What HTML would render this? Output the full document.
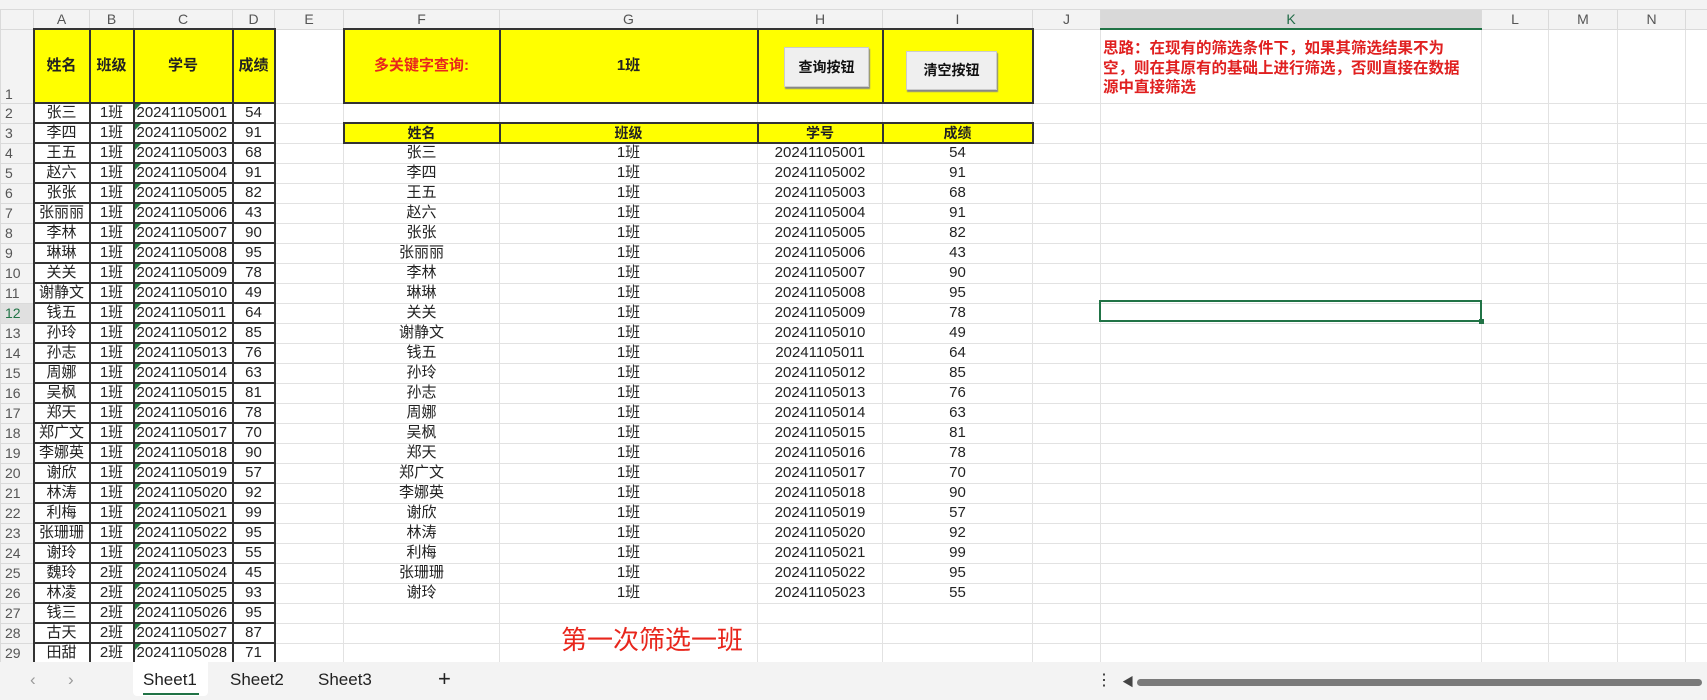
<!DOCTYPE html>
<html><head><meta charset="utf-8">
<style>
*{box-sizing:border-box;margin:0;padding:0}
body{width:1707px;height:700px;overflow:hidden;background:#fff;font-family:"Liberation Sans","Noto Sans CJK SC",sans-serif;position:relative}
.top{position:absolute;left:0;top:0;width:1707px;height:9px;background:#f3f3f3}
table{position:absolute;left:0;top:9px;border-collapse:collapse;table-layout:fixed;width:1707px}
td,th{border:1px solid #e2e2e2;padding:0;white-space:nowrap;overflow:hidden;text-align:center;font-weight:normal;font-size:15px;color:#222;height:20px;line-height:18px}
thead th{background:#f3f3f3;color:#555;font-size:14px;height:19px;border-color:#dadada}
tbody th{background:#f3f3f3;color:#555;font-size:14px;text-align:left;padding-left:4px;border-color:#dadada}
th.k{background:#d9d9d9;color:#1f6b46;border-bottom:2px solid #217346}
.r1 td,.r1 th{height:74px}
.r1 th{vertical-align:bottom}
.y{background:#ffff00;font-weight:bold}
.b{border:2px solid #333}
.c{text-align:left;padding-left:2px;position:relative}
.c::before{content:"";position:absolute;left:0;top:0;border-top:6px solid #1e7a3c;border-right:6px solid transparent}
.h td.y{font-weight:bold;font-size:14px}
.btn{position:absolute;background:#efefef;border:1px solid #ccc;box-shadow:1px 2px 1px #888;font-size:14px;font-weight:bold;text-align:center;color:#111}
.sel{position:absolute;left:1099px;top:300px;width:383px;height:22px;border:2px solid #217346}
.sel::after{content:"";position:absolute;right:-4px;bottom:-4px;width:5px;height:5px;background:#217346}
.note{position:absolute;left:1103px;top:39px;width:364px;color:#e02020;font-weight:bold;font-size:15.5px;line-height:19.5px;white-space:normal;word-break:break-all}
.big{position:absolute;left:561px;top:624px;color:#e8261c;font-size:26px;line-height:32px;font-family:"Liberation Sans","Noto Sans CJK SC",sans-serif}
.tabs{position:absolute;left:0;top:662px;width:1707px;height:38px;background:#f3f3f3;font-size:17px;color:#222}
.tabs span{position:absolute;top:8px}
</style></head><body>
<div class="top"></div>
<table>
<colgroup><col style="width:33px"><col style="width:56px"><col style="width:44px"><col style="width:99px"><col style="width:42px"><col style="width:69px"><col style="width:156px"><col style="width:258px"><col style="width:125px"><col style="width:150px"><col style="width:68px"><col style="width:381px"><col style="width:67px"><col style="width:69px"><col style="width:68px"><col style="width:22px"></colgroup>
<thead><tr><th></th><th>A</th><th>B</th><th>C</th><th>D</th><th>E</th><th>F</th><th>G</th><th>H</th><th>I</th><th>J</th><th class="k">K</th><th>L</th><th>M</th><th>N</th><th></th></tr></thead>
<tbody>
<tr class="r1"><th>1</th><td class="y b">姓名</td><td class="y b">班级</td><td class="y b">学号</td><td class="y b">成绩</td><td></td><td class="y b" style="color:#e8261c">多关键字查询:</td><td class="y b">1班</td><td class="y b"></td><td class="y b"></td><td></td><td></td><td></td><td></td><td></td><td></td></tr>
<tr><th>2</th><td class="b">张三</td><td class="b">1班</td><td class="b c">20241105001</td><td class="b">54</td><td></td><td></td><td></td><td></td><td></td><td></td><td></td><td></td><td></td><td></td><td></td></tr>
<tr class="h"><th>3</th><td class="b">李四</td><td class="b">1班</td><td class="b c">20241105002</td><td class="b">91</td><td></td><td class="y b">姓名</td><td class="y b">班级</td><td class="y b">学号</td><td class="y b">成绩</td><td></td><td></td><td></td><td></td><td></td><td></td></tr>
<tr><th>4</th><td class="b">王五</td><td class="b">1班</td><td class="b c">20241105003</td><td class="b">68</td><td></td><td>张三</td><td>1班</td><td>20241105001</td><td>54</td><td></td><td></td><td></td><td></td><td></td><td></td></tr>
<tr><th>5</th><td class="b">赵六</td><td class="b">1班</td><td class="b c">20241105004</td><td class="b">91</td><td></td><td>李四</td><td>1班</td><td>20241105002</td><td>91</td><td></td><td></td><td></td><td></td><td></td><td></td></tr>
<tr><th>6</th><td class="b">张张</td><td class="b">1班</td><td class="b c">20241105005</td><td class="b">82</td><td></td><td>王五</td><td>1班</td><td>20241105003</td><td>68</td><td></td><td></td><td></td><td></td><td></td><td></td></tr>
<tr><th>7</th><td class="b">张丽丽</td><td class="b">1班</td><td class="b c">20241105006</td><td class="b">43</td><td></td><td>赵六</td><td>1班</td><td>20241105004</td><td>91</td><td></td><td></td><td></td><td></td><td></td><td></td></tr>
<tr><th>8</th><td class="b">李林</td><td class="b">1班</td><td class="b c">20241105007</td><td class="b">90</td><td></td><td>张张</td><td>1班</td><td>20241105005</td><td>82</td><td></td><td></td><td></td><td></td><td></td><td></td></tr>
<tr><th>9</th><td class="b">琳琳</td><td class="b">1班</td><td class="b c">20241105008</td><td class="b">95</td><td></td><td>张丽丽</td><td>1班</td><td>20241105006</td><td>43</td><td></td><td></td><td></td><td></td><td></td><td></td></tr>
<tr><th>10</th><td class="b">关关</td><td class="b">1班</td><td class="b c">20241105009</td><td class="b">78</td><td></td><td>李林</td><td>1班</td><td>20241105007</td><td>90</td><td></td><td></td><td></td><td></td><td></td><td></td></tr>
<tr><th>11</th><td class="b">谢静文</td><td class="b">1班</td><td class="b c">20241105010</td><td class="b">49</td><td></td><td>琳琳</td><td>1班</td><td>20241105008</td><td>95</td><td></td><td></td><td></td><td></td><td></td><td></td></tr>
<tr><th style="color:#217346;background:#e0e0e0">12</th><td class="b">钱五</td><td class="b">1班</td><td class="b c">20241105011</td><td class="b">64</td><td></td><td>关关</td><td>1班</td><td>20241105009</td><td>78</td><td></td><td></td><td></td><td></td><td></td><td></td></tr>
<tr><th>13</th><td class="b">孙玲</td><td class="b">1班</td><td class="b c">20241105012</td><td class="b">85</td><td></td><td>谢静文</td><td>1班</td><td>20241105010</td><td>49</td><td></td><td></td><td></td><td></td><td></td><td></td></tr>
<tr><th>14</th><td class="b">孙志</td><td class="b">1班</td><td class="b c">20241105013</td><td class="b">76</td><td></td><td>钱五</td><td>1班</td><td>20241105011</td><td>64</td><td></td><td></td><td></td><td></td><td></td><td></td></tr>
<tr><th>15</th><td class="b">周娜</td><td class="b">1班</td><td class="b c">20241105014</td><td class="b">63</td><td></td><td>孙玲</td><td>1班</td><td>20241105012</td><td>85</td><td></td><td></td><td></td><td></td><td></td><td></td></tr>
<tr><th>16</th><td class="b">吴枫</td><td class="b">1班</td><td class="b c">20241105015</td><td class="b">81</td><td></td><td>孙志</td><td>1班</td><td>20241105013</td><td>76</td><td></td><td></td><td></td><td></td><td></td><td></td></tr>
<tr><th>17</th><td class="b">郑天</td><td class="b">1班</td><td class="b c">20241105016</td><td class="b">78</td><td></td><td>周娜</td><td>1班</td><td>20241105014</td><td>63</td><td></td><td></td><td></td><td></td><td></td><td></td></tr>
<tr><th>18</th><td class="b">郑广文</td><td class="b">1班</td><td class="b c">20241105017</td><td class="b">70</td><td></td><td>吴枫</td><td>1班</td><td>20241105015</td><td>81</td><td></td><td></td><td></td><td></td><td></td><td></td></tr>
<tr><th>19</th><td class="b">李娜英</td><td class="b">1班</td><td class="b c">20241105018</td><td class="b">90</td><td></td><td>郑天</td><td>1班</td><td>20241105016</td><td>78</td><td></td><td></td><td></td><td></td><td></td><td></td></tr>
<tr><th>20</th><td class="b">谢欣</td><td class="b">1班</td><td class="b c">20241105019</td><td class="b">57</td><td></td><td>郑广文</td><td>1班</td><td>20241105017</td><td>70</td><td></td><td></td><td></td><td></td><td></td><td></td></tr>
<tr><th>21</th><td class="b">林涛</td><td class="b">1班</td><td class="b c">20241105020</td><td class="b">92</td><td></td><td>李娜英</td><td>1班</td><td>20241105018</td><td>90</td><td></td><td></td><td></td><td></td><td></td><td></td></tr>
<tr><th>22</th><td class="b">利梅</td><td class="b">1班</td><td class="b c">20241105021</td><td class="b">99</td><td></td><td>谢欣</td><td>1班</td><td>20241105019</td><td>57</td><td></td><td></td><td></td><td></td><td></td><td></td></tr>
<tr><th>23</th><td class="b">张珊珊</td><td class="b">1班</td><td class="b c">20241105022</td><td class="b">95</td><td></td><td>林涛</td><td>1班</td><td>20241105020</td><td>92</td><td></td><td></td><td></td><td></td><td></td><td></td></tr>
<tr><th>24</th><td class="b">谢玲</td><td class="b">1班</td><td class="b c">20241105023</td><td class="b">55</td><td></td><td>利梅</td><td>1班</td><td>20241105021</td><td>99</td><td></td><td></td><td></td><td></td><td></td><td></td></tr>
<tr><th>25</th><td class="b">魏玲</td><td class="b">2班</td><td class="b c">20241105024</td><td class="b">45</td><td></td><td>张珊珊</td><td>1班</td><td>20241105022</td><td>95</td><td></td><td></td><td></td><td></td><td></td><td></td></tr>
<tr><th>26</th><td class="b">林凌</td><td class="b">2班</td><td class="b c">20241105025</td><td class="b">93</td><td></td><td>谢玲</td><td>1班</td><td>20241105023</td><td>55</td><td></td><td></td><td></td><td></td><td></td><td></td></tr>
<tr><th>27</th><td class="b">钱三</td><td class="b">2班</td><td class="b c">20241105026</td><td class="b">95</td><td></td><td></td><td></td><td></td><td></td><td></td><td></td><td></td><td></td><td></td><td></td></tr>
<tr><th>28</th><td class="b">古天</td><td class="b">2班</td><td class="b c">20241105027</td><td class="b">87</td><td></td><td></td><td></td><td></td><td></td><td></td><td></td><td></td><td></td><td></td><td></td></tr>
<tr><th>29</th><td class="b">田甜</td><td class="b">2班</td><td class="b c">20241105028</td><td class="b">71</td><td></td><td></td><td></td><td></td><td></td><td></td><td></td><td></td><td></td><td></td><td></td></tr>
</tbody></table>
<div class="btn" style="left:784px;top:47px;width:85px;height:40px;line-height:38px">查询按钮</div>
<div class="btn" style="left:906px;top:51px;width:91px;height:39px;line-height:37px">清空按钮</div>
<div class="note">思路：在现有的筛选条件下，如果其筛选结果不为空，则在其原有的基础上进行筛选，否则直接在数据源中直接筛选</div>
<div class="sel"></div>
<div class="big">第一次筛选一班</div>
<div class="tabs">
<span style="left:30px;color:#999">&#8249;</span><span style="left:68px;color:#999">&#8250;</span>
<div style="position:absolute;left:133px;top:0;width:75px;height:34px;background:#fff;border-radius:0 0 4px 4px"></div>
<span style="left:143px">Sheet1</span>
<div style="position:absolute;left:143px;top:31px;width:56px;height:2px;background:#217346"></div>
<span style="left:230px">Sheet2</span><span style="left:318px">Sheet3</span>
<span style="left:438px;font-size:22px;top:4px">+</span>
<span style="left:1096px;font-size:16px">&#8942;</span>
<span style="left:1122px;font-size:12px;top:11px;color:#444">&#9664;</span>
<div style="position:absolute;left:1137px;top:17px;width:565px;height:7px;background:#7a7a7a;border-radius:4px"></div>
</div>
</body></html>
